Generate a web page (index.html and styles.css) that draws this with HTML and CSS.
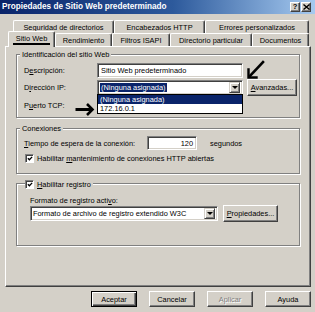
FILE: index.html
```html
<!DOCTYPE html>
<html lang="es">
<head>
<meta charset="utf-8">
<title>Propiedades de Sitio Web predeterminado</title>
<link rel="stylesheet" href="styles.css">
</head>
<body>
<div class="window">
  <div class="titlebar">
    <span class="title">Propiedades de Sitio Web predeterminado</span>
    <div class="tb-btns">
      <span class="tb-btn">?</span>
      <span class="tb-btn"><svg width="7" height="6" viewBox="0 0 7 6"><path d="M0.5 0.5L6.5 5.5M6.5 0.5L0.5 5.5" stroke="#000" stroke-width="1.4"/></svg></span>
    </div>
  </div>

  <div class="tabs">
    <div class="tabrow back">
      <div class="tab">Seguridad de directorios</div>
      <div class="tab">Encabezados HTTP</div>
      <div class="tab">Errores personalizados</div>
    </div>
    <div class="tabrow front">
      <div class="tab sel"><span class="mark">Sitio Web</span></div>
      <div class="tab">Rendimiento</div>
      <div class="tab">Filtros ISAPI</div>
      <div class="tab">Directorio particular</div>
      <div class="tab">Documentos</div>
    </div>
  </div>

  <div class="panel">
    <div class="group g1">
      <div class="gtitle">Identificación del sitio Web</div>
      <div class="frow r1">
        <span>D<u>e</u>scripción:</span>
        <div class="field"><span>Sitio Web predeterminado</span></div>
      </div>
      <div class="frow r2">
        <span>D<u>i</u>rección IP:</span>
        <div class="field select"><span class="hl">(Ninguna asignada)</span><span class="dd"><span class="tri"></span></span></div>
        <div class="btn"><span><u>A</u>vanzadas...</span></div>
      </div>
      <div class="frow r3">
        <span>P<u>u</u>erto TCP:</span>
        <div class="field small"></div>
      </div>
    </div>

    <div class="group g2">
      <div class="gtitle">Conexiones</div>
      <div class="trow">
        <span class="tlabel"><u>T</u>iempo de espera de la conexión:</span>
        <div class="field num"><span>120</span></div>
        <span class="unit">segundos</span>
      </div>
      <div class="crow">
        <span class="cb"><svg width="7" height="7" viewBox="0 0 7 7"><path d="M1 3.2L2.8 5L6 1.6" fill="none" stroke="#000" stroke-width="1.5"/></svg></span>
        <span>Habilitar <u>m</u>antenimiento de conexiones HTTP abiertas</span>
      </div>
    </div>

    <div class="group g3">
      <div class="gtitle ctitle">
        <span class="cb"><svg width="7" height="7" viewBox="0 0 7 7"><path d="M1 3.2L2.8 5L6 1.6" fill="none" stroke="#000" stroke-width="1.5"/></svg></span>
        <span><u>H</u>abilitar registro</span>
      </div>
      <div class="flabel">Formato de registro acti<u>v</u>o:</div>
      <div class="lrow">
        <div class="field select"><span>Formato de archivo de registro extendido W3C</span><span class="dd"><span class="tri"></span></span></div>
        <div class="btn"><span><u>P</u>ropiedades...</span></div>
      </div>
    </div>
  </div>

  <div class="buttons">
    <div class="btn def"><span>Aceptar</span></div>
    <div class="btn"><span>Cancelar</span></div>
    <div class="btn dis"><span>Aplicar</span></div>
    <div class="btn"><span>Ayuda</span></div>
  </div>
</div>

<div class="droplist">
  <div class="item on">(Ninguna asignada)</div>
  <div class="item">172.16.0.1</div>
</div>

<svg class="annot" width="315" height="312" viewBox="0 0 315 312">
  <g fill="none" stroke="#000" stroke-linecap="square">
    <path d="M263 62L250 76" stroke-width="2.6"/>
    <path d="M248.5 69.5V77.5H256.5" stroke-width="2.4"/>
    <path d="M77 109.5H91" stroke-width="3"/>
    <path d="M87 104L92.5 109.5L87 115" stroke-width="2.6" stroke-linecap="butt"/>
  </g>
</svg>
</body>
</html>
```

FILE: styles.css
```css
* { box-sizing: border-box; }
html, body { margin: 0; padding: 0; }
body {
  width: 315px;
  height: 312px;
  background: #d4d0c8;
  font-family: "Liberation Sans", Arial, sans-serif;
  font-size: 7.4px;
  line-height: 9px;
  color: #000;
  overflow: hidden;
  position: relative;
}
u { text-decoration: underline; text-underline-offset: 1px; }

.window { display: flex; flex-direction: column; height: 312px; }

.titlebar {
  height: 14px;
  flex: none;
  display: flex;
  align-items: center;
  justify-content: space-between;
  padding: 0 4px 0 2px;
  background: linear-gradient(90deg, #0a246a 0%, #2d5a9c 55%, #a6caf0 100%);
}
.title {
  color: #fff;
  font-weight: bold;
  font-size: 8.2px;
  line-height: 10px;
  white-space: nowrap;
}
.tb-btns { display: flex; gap: 1px; }
.tb-btn {
  width: 10px;
  height: 10px;
  background: #d4d0c8;
  border: 1px solid;
  border-color: #fff #404040 #404040 #fff;
  box-shadow: inset -1px -1px #808080;
  display: flex;
  align-items: center;
  justify-content: center;
  font-weight: bold;
  font-size: 7.5px;
  line-height: 8px;
}

.tabs { padding-top: 6px; flex: none; }
.tabrow { display: grid; height: 13px; }
.back { grid-template-columns: 101px 91px 104px; margin-left: 13px; }
.front { grid-template-columns: 47px 57px 58px 82px 57px; margin-left: 8px; }
.tab {
  border-top: 1px solid #fff;
  border-left: 1px solid #fff;
  border-right: 1px solid #404040;
  box-shadow: inset -1px 0 #808080;
  border-radius: 2px 2px 0 0;
  display: flex;
  align-items: center;
  justify-content: center;
  white-space: nowrap;
  background: #d4d0c8;
}
.tab.sel {
  margin-top: -2px;
  margin-bottom: -1px;
  position: relative;
  z-index: 1;
}
.mark {
  border-bottom: 2px solid #000;
  padding: 0 3px;
  line-height: 8px;
}

.panel {
  flex: none;
  height: 241px;
  width: 306px;
  margin-left: 5px;
  border: 1px solid;
  border-color: #fff #404040 #404040 #fff;
  box-shadow: inset -1px -1px #808080;
  padding: 7px 10px 0 10px;
}

.group {
  border: 1px solid #808080;
  box-shadow: inset 1px 1px #fff, 1px 1px #fff;
  display: flex;
  flex-direction: column;
  padding: 0 7px;
}
.gtitle {
  align-self: flex-start;
  margin: -5px 0 0 -4px;
  padding: 0 2px;
  background: #d4d0c8;
  line-height: 9px;
  white-space: nowrap;
}
.g1 { padding-bottom: 5px; }
.g2 { margin-top: 10px; padding-bottom: 9px; }
.g3 { margin-top: 9px; padding: 0 13px 23px 13px; }
.ctitle {
  display: flex;
  align-items: center;
  gap: 3px;
  height: 10px;
  margin-left: -5px;
  padding: 0 2px 0 0;
}

.frow {
  display: grid;
  grid-template-columns: 69px 146px 50px;
  column-gap: 4px;
  align-items: center;
}
.r1 { margin-top: 4px; height: 15px; }
.r2 { margin-top: 1px; height: 17px; }
.r3 { margin-top: 2px; height: 14px; }

.field {
  background: #fff;
  border: 1px solid;
  border-color: #808080 #fff #fff #808080;
  box-shadow: inset 1px 1px #404040, inset -1px -1px #d4d0c8;
  height: 15px;
  display: flex;
  align-items: center;
  padding: 0 3px;
  white-space: nowrap;
  overflow: hidden;
}
.field.small { width: 48px; height: 14px; }
.select { justify-content: space-between; padding: 0 2px 0 2px; }
.hl {
  background: #0a246a;
  color: #fff;
  padding: 0 1px;
  line-height: 9px;
}
.dd {
  flex: none;
  width: 11px;
  height: 11px;
  background: #d4d0c8;
  border: 1px solid;
  border-color: #d4d0c8 #404040 #404040 #d4d0c8;
  box-shadow: inset 1px 1px #fff, inset -1px -1px #808080;
  display: flex;
  align-items: center;
  justify-content: center;
}
.tri {
  width: 0;
  height: 0;
  border-left: 3px solid transparent;
  border-right: 3px solid transparent;
  border-top: 3px solid #000;
}

.btn {
  height: 17px;
  background: #d4d0c8;
  border: 1px solid;
  border-color: #fff #404040 #404040 #fff;
  box-shadow: inset -1px -1px #808080;
  display: flex;
  align-items: center;
  justify-content: center;
  white-space: nowrap;
}

.trow {
  margin-top: 3px;
  height: 14px;
  display: grid;
  grid-template-columns: 123px 50px auto;
  align-items: center;
}
.tlabel { white-space: nowrap; }
.unit { margin-left: 13px; white-space: nowrap; }
.num { justify-content: flex-end; height: 14px; }

.crow {
  margin-top: 2px;
  height: 12px;
  display: flex;
  align-items: center;
  gap: 3px;
  padding-left: 1px;
}
.cb {
  flex: none;
  width: 9px;
  height: 9px;
  background: #fff;
  border: 1px solid;
  border-color: #808080 #fff #fff #808080;
  box-shadow: inset 1px 1px #404040;
  display: flex;
  align-items: center;
  justify-content: center;
}
.cb svg { display: block; margin: 1px 0 0 1px; }

.flabel { margin-top: 7px; height: 9px; }
.lrow {
  height: 17px;
  display: grid;
  grid-template-columns: 188px 55px;
  column-gap: 5px;
  align-items: center;
}

.buttons {
  flex: none;
  margin-top: 4px;
  height: 16px;
  display: flex;
  justify-content: flex-end;
  gap: 12px;
  padding-right: 4px;
}
.buttons .btn { width: 46px; height: 16px; }
.btn.def { border-color: #000; box-shadow: inset 1px 1px #fff, inset -1px -1px #404040, inset -2px -2px #808080; }
.btn.dis { color: #808080; text-shadow: 1px 1px #fff; }

.droplist {
  position: absolute;
  left: 97px;
  top: 94px;
  width: 146px;
  height: 20px;
  background: #fff;
  border: 1px solid #000;
  padding: 0;
}
.item { height: 9px; line-height: 9px; padding: 0 2px; white-space: nowrap; }
.item.on { background: #0a246a; color: #fff; }

.annot {
  position: absolute;
  left: 0;
  top: 0;
  pointer-events: none;
}
```
